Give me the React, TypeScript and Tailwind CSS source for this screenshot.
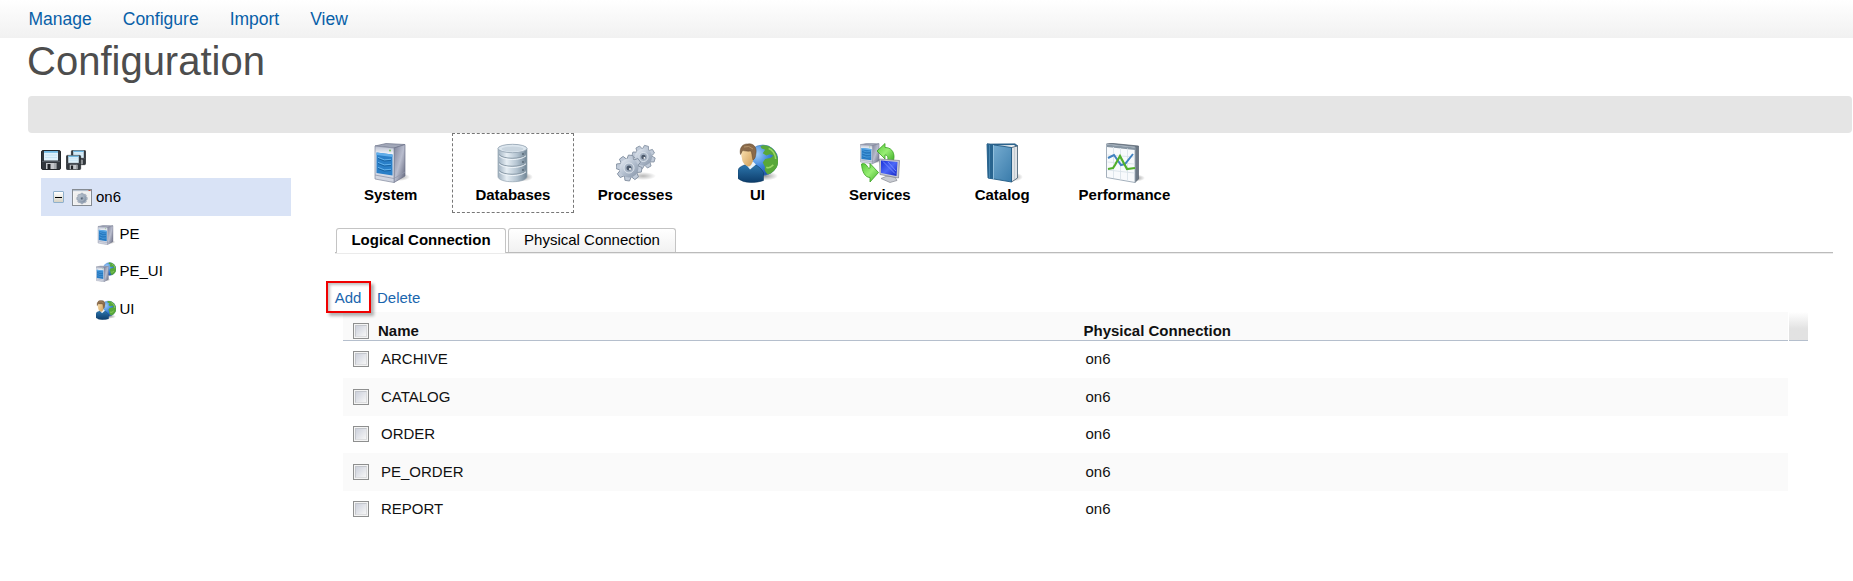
import React from "react";

type IconProps = { className?: string };

function Gradients() {
  return (
    <svg className="absolute h-0 w-0" aria-hidden="true">
      <defs>
        <linearGradient id="steel" x1="0" y1="0" x2="1" y2="1">
          <stop offset="0" stopColor="#7d8299" />
          <stop offset="0.5" stopColor="#b9bdce" />
          <stop offset="1" stopColor="#5c6076" />
        </linearGradient>
        <linearGradient id="front" x1="0" y1="0" x2="0" y2="1">
          <stop offset="0" stopColor="#b6bccd" />
          <stop offset="0.2" stopColor="#eef1f7" />
          <stop offset="1" stopColor="#ccd1de" />
        </linearGradient>
        <linearGradient id="drum" x1="0" y1="0" x2="1" y2="0">
          <stop offset="0" stopColor="#9fb0bf" />
          <stop offset="0.3" stopColor="#e6eef4" />
          <stop offset="0.65" stopColor="#b4c4d1" />
          <stop offset="1" stopColor="#6f8494" />
        </linearGradient>
        <linearGradient id="gear" x1="0" y1="0" x2="1" y2="1">
          <stop offset="0" stopColor="#e9eef5" />
          <stop offset="0.5" stopColor="#b3bfcf" />
          <stop offset="1" stopColor="#8593a6" />
        </linearGradient>
        <radialGradient id="ocean" cx="0.3" cy="0.3" r="0.8">
          <stop offset="0" stopColor="#a3d0fb" />
          <stop offset="0.5" stopColor="#3f87dd" />
          <stop offset="1" stopColor="#1a4a9e" />
        </radialGradient>
        <linearGradient id="skin" x1="0" y1="0" x2="1" y2="1">
          <stop offset="0" stopColor="#ffe9bd" />
          <stop offset="1" stopColor="#cf9a50" />
        </linearGradient>
        <linearGradient id="shirt" x1="0" y1="0" x2="0" y2="1">
          <stop offset="0" stopColor="#2d77ae" />
          <stop offset="1" stopColor="#0d3d6b" />
        </linearGradient>
        <linearGradient id="leaf" x1="0" y1="0" x2="1" y2="1">
          <stop offset="0" stopColor="#58c839" />
          <stop offset="0.5" stopColor="#98ee74" />
          <stop offset="1" stopColor="#3fae27" />
        </linearGradient>
        <linearGradient id="cover" x1="0" y1="0" x2="1" y2="1">
          <stop offset="0" stopColor="#7fb3d6" />
          <stop offset="1" stopColor="#3a7cab" />
        </linearGradient>
        <linearGradient id="screen" x1="0" y1="0" x2="1" y2="1">
          <stop offset="0" stopColor="#1b32d8" />
          <stop offset="0.5" stopColor="#4c68f8" />
          <stop offset="1" stopColor="#1424c4" />
        </linearGradient>
        <radialGradient id="shade">
          <stop offset="0" stopColor="#000" stopOpacity="0.4" />
          <stop offset="1" stopColor="#000" stopOpacity="0" />
        </radialGradient>
      </defs>
    </svg>
  );
}

function Tower() {
  return (
    <g>
      <ellipse cx="28" cy="34" rx="11" ry="4" fill="url(#shade)" />
      <path d="M4 3 15 .5 34 1.5 24 5Z" fill="#a1a7b8" stroke="#6f748a" strokeWidth=".7" />
      <path d="M23 5 34 1.500V33L23 39.500Z" fill="url(#steel)" stroke="#6d7289" strokeWidth=".7" />
      <path d="M4 3 23 5V39.500L4 36Z" fill="url(#front)" stroke="#83899d" strokeWidth=".7" />
      <path d="M5.500 9.500 21.500 11.500V32.500L5.500 30Z" fill="#2a7fc8" />
      <path d="M5.500 9.500 21.500 11.500V14L5.500 12Z" fill="#5fadea" />
      <path d="M7 15.500q6 4 13 2M7 20.500q6 4 13 2M7 25.500q6 4 13 2" fill="none" stroke="#1a64a3" strokeWidth="1" />
      <path d="M7 14.300q6 4 13 2M7 19.300q6 4 13 2M7 24.300q6 4 13 2" fill="none" stroke="#62b1ec" strokeWidth="1" />
      <path d="M4 32 23 35.500 34 29" fill="none" stroke="#9298ac" strokeWidth=".8" />
      <circle cx="19" cy="7.500" r=".9" fill="#6abf4b" />
    </g>
  );
}

function Globe() {
  return (
    <g>
      <circle cx="27" cy="14" r="13" fill="url(#ocean)" stroke="#417bb5" strokeWidth=".5" />
      <path
        d="M25 2c4-2 9 0 12 4 3 4 4 10 2 14-2 3-5 6-8 6-2-2-3-4-2-6l-2-4 2-3 5-1 2-2-3-1-3 1-3-2 2-3-3-1Z"
        fill="#58a83a"
      />
      <path d="M32 4c3 1 6 5 6 9M30 20c2 1 4 0 6-2" fill="none" stroke="#9bd868" strokeWidth="1.300" />
    </g>
  );
}

function Person() {
  return (
    <g>
      <path
        d="M0 26c2-3 5-4 8-5h9c4 2 7 5 8.500 8v8q-5 2-13 2T0 35Z"
        fill="url(#shirt)"
        stroke="#0b3459"
        strokeWidth=".5"
      />
      <path d="m8 21 4 5 6-5-3-3-6 1Z" fill="#e9f3fa" />
      <path d="M3 6c0-4 4-5 8-4 4 0 6 3 5 8 0 6-2 12-5 13-3 0-7-4-7-8-1-3-1-6-1-9Z" fill="url(#skin)" />
      <path
        d="M2.500 11C1 4 5 0 10 .500c5-1 9 3 8 9-.5 4-1 6-3 7-1-4-1-7-2-9C9 8 5 7 4.500 7Z"
        fill="#8a6a4a"
        stroke="#5d442b"
        strokeWidth=".5"
      />
      <path d="M6 3.500q5-2 9 2" fill="none" stroke="#b3936b" strokeWidth="1" />
    </g>
  );
}

function Gear({ x, y, r, turn = 0 }: { x: number; y: number; r: number; turn?: number }) {
  const teeth = [0, 45, 90, 135, 180, 225, 270, 315];
  return (
    <g transform={`translate(${x} ${y}) scale(${r / 10})`}>
      {teeth.map((angle) => (
        <path
          key={angle}
          d="M-3.500-8-2.300-12.800H2.300L3.500-8Z"
          transform={`rotate(${angle + turn})`}
          fill="#c0cad8"
          stroke="#8592a3"
          strokeWidth=".9"
        />
      ))}
      <circle r="9.500" fill="url(#gear)" />
      <circle r="5" fill="#a3b0c1" stroke="#dfe6ee" strokeWidth="1" />
      <circle r="2.500" fill="#4c596b" />
      <circle cx="1" cy="1" r="1" fill="#fff" />
    </g>
  );
}

function SystemIcon({ className }: IconProps) {
  return (
    <svg viewBox="0 0 40 40" className={className}>
      <Tower />
    </svg>
  );
}

function DatabaseIcon({ className }: IconProps) {
  return (
    <svg viewBox="0 0 40 40" className={className}>
      <ellipse cx="30" cy="34" rx="10" ry="4.500" fill="url(#shade)" />
      <path d="M5 5.500v28c0 7 29 7 29 0v-28Z" fill="url(#drum)" stroke="#93a3b0" strokeWidth=".7" />
      <ellipse cx="19.500" cy="5.500" rx="14.500" ry="4.200" fill="#dce6ee" stroke="#8fa0ae" strokeWidth=".8" />
      <ellipse cx="19.500" cy="6" rx="11" ry="2.500" fill="#c9d5df" />
      <path
        d="M6 11.500c4 5 22 5 27 0M6 19.500c4 5 22 5 27 0M6 27.500c4 5 22 5 27 0"
        fill="none"
        stroke="#8b9ba8"
        strokeWidth="1"
      />
      <path
        d="M6 12.800c4 5 22 5 27 0M6 20.800c4 5 22 5 27 0M6 28.800c4 5 22 5 27 0"
        fill="none"
        stroke="#edf3f8"
        strokeWidth="1"
      />
      <path d="M29 10h2v2h-2zM29 18h2v2h-2zM29 26h2v2h-2z" fill="#667785" />
    </svg>
  );
}

function ProcessIcon({ className }: IconProps) {
  return (
    <svg viewBox="0 0 40 40" className={className}>
      <ellipse cx="27" cy="33" rx="13" ry="4" fill="url(#shade)" opacity=".7" />
      <Gear x={27.5} y={14} r={9} turn={15} />
      <Gear x={13} y={25} r={10} turn={8} />
    </svg>
  );
}

function UserIcon({ className }: IconProps) {
  return (
    <svg viewBox="0 0 40 40" className={className}>
      <ellipse cx="27" cy="33" rx="13" ry="4.500" fill="url(#shade)" />
      <g transform="translate(-6.800 .800) scale(1.170)">
        <Globe />
      </g>
      <g transform="translate(0 .500)">
        <Person />
      </g>
    </svg>
  );
}

function ServicesIcon({ className }: IconProps) {
  return (
    <svg viewBox="0 0 40 40" className={className}>
      <g transform="translate(-2 0) scale(.620 .530)">
        <Tower />
      </g>
      <path
        d="M17 8 25 .5v4c6 0 9 4 9 9.500l-.5 4h-6c1-4 0-6-2.500-6V16Z"
        fill="url(#leaf)"
        stroke="#38a01f"
        strokeWidth=".8"
      />
      <path
        d="M1.500 21C4 20 6 21 7 23c1 2 2 2.500 3 2v-4.500l8.500 9L10 39v-4.500c-5 0-8-6-8.500-13.500Z"
        fill="url(#leaf)"
        stroke="#38a01f"
        strokeWidth=".8"
      />
      <path d="m27 33 8 1 2 3.500-7 2-9-4Z" fill="#c9ccd2" stroke="#777b84" strokeWidth=".6" />
      <path d="M19.500 16 39.500 17.500 38.500 35 20 31.500Z" fill="#c6c8d2" stroke="#7e818e" strokeWidth=".7" />
      <path d="M21 17.500 37.500 19 36.500 33 21 30Z" fill="url(#screen)" />
      <path d="m23 18.500 12 12M28 19l8 9" stroke="#8297ff" strokeWidth=".8" />
    </svg>
  );
}

function CatalogIcon({ className }: IconProps) {
  return (
    <svg viewBox="0 0 40 40" className={className}>
      <ellipse cx="30" cy="34" rx="10" ry="4.500" fill="url(#shade)" />
      <path d="M4 1 32 .800 35 3 28 5Z" fill="#2d6690" stroke="#24587f" strokeWidth=".6" />
      <path d="M10 2.500 31 2 33 3.500 28 4.500Z" fill="#f1f3f5" />
      <path d="M28.500 4.500 34.500 3V35L28.500 39Z" fill="#dfe3e7" stroke="#52697a" strokeWidth=".9" />
      <path d="M31.500 5v31" stroke="#b4bdc4" strokeWidth=".6" />
      <path d="M4 1 28.500 4.500V39L5 35Z" fill="url(#cover)" stroke="#235b85" strokeWidth=".9" />
      <path d="M4 1 10 2V36L5 35Z" fill="#28648f" />
      <path d="M6.500 2v33" stroke="#4886b0" strokeWidth="1" />
      <path d="M10.500 2v34" stroke="#9cc8e2" strokeWidth=".8" />
    </svg>
  );
}

function PerformanceIcon({ className }: IconProps) {
  return (
    <svg viewBox="0 0 40 40" className={className}>
      <ellipse cx="31" cy="35" rx="9" ry="3.500" fill="url(#shade)" />
      <path d="M1.500 1 6 .300 33.500 3V36l-3.500 3.500Z" fill="#6c7885" stroke="#56616e" strokeWidth=".7" />
      <path d="M1.500 1 30 4V39.500L1.500 34.500Z" fill="#f8fafc" stroke="#9aa7b4" strokeWidth=".9" />
      <path d="M2 1.500 30 4.500V7L2 4Z" fill="#8796a4" />
      <path
        d="M8.500 4v31M15.500 5v31.500M22.500 5.500v32.500M2.500 12l27 2M2.500 19l27 2M2.500 27l27 3"
        stroke="#dae3ea"
        strokeWidth=".9"
      />
      <path d="m3 15 6-3 7 10 4-1 8-10" fill="none" stroke="#4182c0" strokeWidth="2" />
      <path d="m3 26 5-1 2-3 5-9 7 13 8-1" fill="none" stroke="#51b02b" strokeWidth="2.200" />
    </svg>
  );
}

function Disk() {
  return (
    <g>
      <rect x=".5" y=".5" width="19" height="19" rx="1.500" fill="#33383e" stroke="#24282c" />
      <rect x="3" y="1" width="14" height="9.500" fill="#dff1fb" />
      <path d="M3 1h14v1.800H3z" fill="#70b8e2" />
      <path d="M4 5h12M4 7.500h12" stroke="#bfdff0" strokeWidth=".8" />
      <path d="M1 11.500h18" stroke="#596169" strokeWidth=".8" />
      <rect x="5" y="13" width="10.500" height="6" fill="#c4c7cb" />
      <rect x="6.500" y="14" width="3" height="5" fill="#202327" />
      <path d="M14 13v6" stroke="#8d9196" />
    </g>
  );
}

function SaveIcon({ className }: IconProps) {
  return (
    <svg viewBox="0 0 20 20" className={className}>
      <Disk />
    </svg>
  );
}

function SaveAllIcon({ className }: IconProps) {
  return (
    <svg viewBox="0 0 20 20" className={className}>
      <g transform="translate(5 0) scale(.750)">
        <Disk />
      </g>
      <g transform="translate(0 5) scale(.750)">
        <Disk />
      </g>
    </svg>
  );
}

function WindowGearIcon({ className }: IconProps) {
  return (
    <svg viewBox="0 0 20 17" className={className}>
      <rect x=".5" y=".5" width="19" height="16" fill="#f5f6f7" stroke="#858b92" />
      <path d="M1 1h18v1.200H1z" fill="#b5c0cd" />
      <path d="M16.500 1h2v1h-2z" fill="#c7513f" />
      <path d="M2 3.500h16v12H2z" fill="#efefef" />
      <Gear x={10} y={9.5} r={4.2} />
      <circle cx="10" cy="9.500" r="5" fill="#66788c" opacity=".3" />
    </svg>
  );
}

function ServerIcon({ className }: IconProps) {
  return (
    <svg viewBox="0 0 40 40" className={className}>
      <Tower />
    </svg>
  );
}

function ServerGlobeIcon({ className }: IconProps) {
  return (
    <svg viewBox="0 0 40 40" className={className}>
      <Globe />
      <g transform="translate(-3 7.500) scale(.820)">
        <Tower />
      </g>
    </svg>
  );
}

function Checkbox() {
  return (
    <span className="flex h-4 w-4 shrink-0 border border-[#8e8f8f] bg-[#f4f4f4] p-px">
      <span className="flex-1 border border-[#c3c6cc] border-r-[#dcdddf] border-b-[#dcdddf] bg-linear-to-br from-[#cdd1dc] to-[#f6f6f6]" />
    </span>
  );
}

const menu = ["Manage", "Configure", "Import", "View"];

const tools = [
  { label: "System", Icon: SystemIcon },
  { label: "Databases", Icon: DatabaseIcon, active: true },
  { label: "Processes", Icon: ProcessIcon },
  { label: "UI", Icon: UserIcon },
  { label: "Services", Icon: ServicesIcon },
  { label: "Catalog", Icon: CatalogIcon },
  { label: "Performance", Icon: PerformanceIcon },
];

const nodes = [
  { label: "PE", Icon: ServerIcon },
  { label: "PE_UI", Icon: ServerGlobeIcon },
  { label: "UI", Icon: UserIcon },
];

const rows = [
  { name: "ARCHIVE", connection: "on6", style: "h-[37px] pb-px" },
  { name: "CATALOG", connection: "on6", style: "h-[38px] bg-[#fafafa]" },
  { name: "ORDER", connection: "on6", style: "h-[37px] pb-px" },
  { name: "PE_ORDER", connection: "on6", style: "h-[38px] bg-[#fafafa]" },
  { name: "REPORT", connection: "on6", style: "h-[37px] pb-px" },
];

function Sidebar() {
  return (
    <aside className="ml-[41px] w-[250px] shrink-0 pt-[17px]">
      <div className="flex gap-[5px]">
        <SaveIcon className="h-5 w-5" />
        <SaveAllIcon className="h-5 w-5" />
      </div>
      <div className="mt-2 flex h-[38px] items-center bg-[#d9e3f6] pl-[12px]">
        <span className="flex h-3 w-[11px] items-center justify-center rounded-[1px] border border-[#8fb0cc] bg-linear-to-b from-white to-[#d5d2c4]">
          <span className="h-px w-[7px] bg-black" />
        </span>
        <WindowGearIcon className="ml-[8px] h-[17px] w-5" />
        <span className="ml-1 pb-px">on6</span>
      </div>
      {nodes.map(({ label, Icon }) => (
        <div key={label} className="flex h-[37.500px] items-center pl-[55px]">
          <Icon className="h-5 w-5" />
          <span className="ml-[3.500px] pb-[2px]">{label}</span>
        </div>
      ))}
    </aside>
  );
}

function Toolbar() {
  return (
    <div className="ml-[38.500px] flex">
      {tools.map(({ label, Icon, active }) => (
        <button
          key={label}
          className={
            active
              ? "flex h-[80px] w-[122.300px] flex-col items-center border border-dashed border-[#777] pt-[9px] font-bold"
              : "flex h-[80px] w-[122.300px] flex-col items-center pt-[10px] font-bold"
          }
        >
          <Icon className="ml-px h-10 w-10" />
          <span className="mt-[3px] leading-[18px]">{label}</span>
        </button>
      ))}
    </div>
  );
}

function Tabs() {
  return (
    <div className="mt-[15px] ml-[44px] flex w-[1498px] items-end border-b border-[#bbb] pl-px shadow-[0_1px_0_#ebebeb]">
      <div className="-mb-px flex h-[25px] w-[170px] items-center justify-center rounded-t-[3px] border border-b-0 border-[#c4c4c4] bg-white pb-[3px] font-bold">
        Logical Connection
      </div>
      <div className="ml-[2px] flex h-6 w-[168px] items-center justify-center rounded-t-[3px] border border-b-0 border-[#c4c4c4] bg-linear-to-b from-white to-[#f1f1f1] pb-[2px]">
        Physical Connection
      </div>
    </div>
  );
}

function ConnectionTable() {
  return (
    <div className="ml-[52px] text-[#111]">
      <div className="flex">
        <div className="flex h-[29px] w-[1445px] items-end border-b border-[#b5bfcd] bg-[#fafafa] pl-[10px] font-bold">
          <div className="mb-px">
            <Checkbox />
          </div>
          <span className="w-[714.500px] pl-[9px] leading-[18px]">Name</span>
          <span className="leading-[18px]">Physical Connection</span>
        </div>
        <div className="ml-px h-[29px] w-[19px] border-b border-[#b5bfcd] bg-linear-to-b from-white to-[#e2e2e2] to-60%" />
      </div>
      {rows.map((row) => (
        <div key={row.name} className={`flex w-[1445px] items-center pl-[10px] ${row.style}`}>
          <Checkbox />
          <span className="w-[716.500px] pl-[12px]">{row.name}</span>
          <span>{row.connection}</span>
        </div>
      ))}
    </div>
  );
}

export default function App() {
  return (
    <div className="h-[581px] w-[1853px] overflow-hidden bg-white font-['Liberation_Sans',Arial,sans-serif] text-[15px] leading-[18px] text-black">
      <Gradients />
      <nav className="flex h-[38px] items-center gap-[31px] bg-linear-to-b from-white to-[#f1f1f1] pl-[28.500px] text-[17.500px] text-[#0860a8]">
        {menu.map((item) => (
          <a key={item}>{item}</a>
        ))}
      </nav>
      <h1 className="h-[58px] pl-[27px] text-[40px] leading-[46px] text-[#4d4d4d]">Configuration</h1>
      <div className="mr-px ml-7 h-[37px] rounded-[4px] bg-[#e5e5e5]" />
      <div className="flex">
        <Sidebar />
        <main className="flex-1">
          <Toolbar />
          <Tabs />
          <div className="flex h-[59px] items-end pl-[35px] text-[#1a66ae]">
            <a className="relative z-10 -mb-px flex h-8 w-[45px] items-center justify-center border-2 border-[#f00000] pt-[2px] pr-px shadow-[3px_3px_3px_rgba(0,0,0,0.3),inset_2px_2px_3px_rgba(0,0,0,0.25)]">
              Add
            </a>
            <a className="ml-[6px] pb-[5px]">Delete</a>
          </div>
          <ConnectionTable />
        </main>
      </div>
    </div>
  );
}
